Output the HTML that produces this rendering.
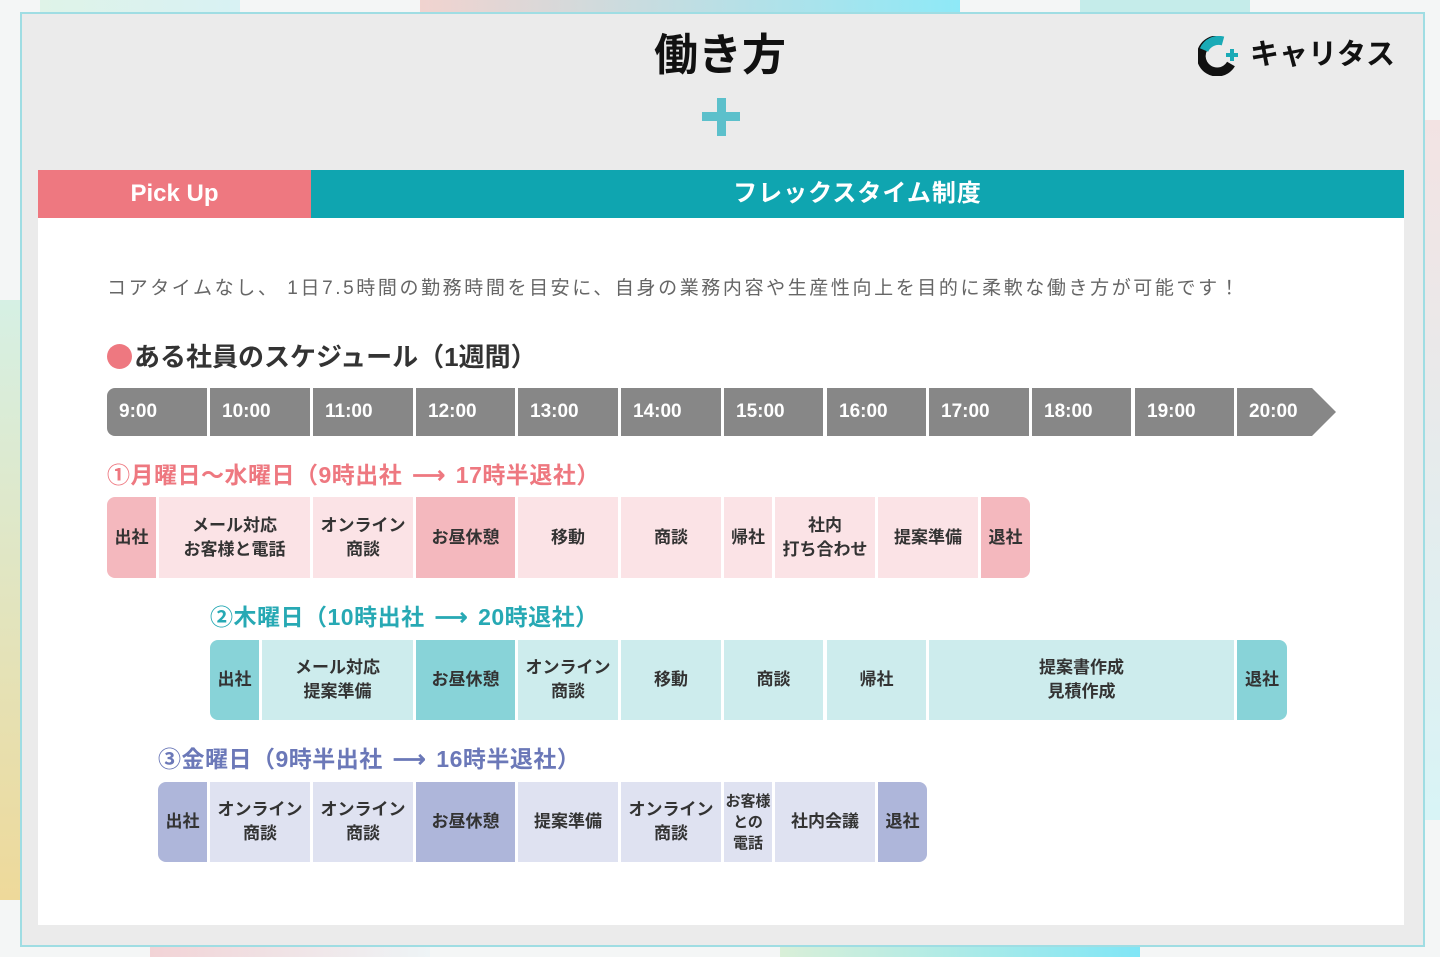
<!DOCTYPE html>
<html><head><meta charset="utf-8"><style>
*{margin:0;padding:0;box-sizing:border-box}
body{width:1440px;height:957px;overflow:hidden;position:relative;background:#f4f6f6;font-family:"Liberation Sans","Noto Sans CJK JP",sans-serif}
.a{position:absolute}
.c{position:absolute;display:flex;align-items:center;justify-content:center;text-align:center;font-weight:bold;font-size:17px;line-height:24px;color:#333}
.t{position:absolute;top:388px;height:48px;background:#878787;color:#fff;font-weight:bold;font-size:19px;display:flex;align-items:center;padding-left:12px}
.p{background:#fbe3e6}.pd{background:#f4b8be}
.g{background:#cdeced}.gd{background:#88d3d8}
.b{background:#dfe2f1}.bd{background:#aeb6da}
.lb{position:absolute;font-size:23px;line-height:30px;font-weight:bold;letter-spacing:0.5px}
.ar{font-size:23px;margin:0 10px}
</style></head><body>
<div class="a" style="left:40px;top:0;width:200px;height:12px;background:linear-gradient(90deg,#dff3e8,#d8f2f4)"></div>
<div class="a" style="left:420px;top:0;width:540px;height:12px;background:linear-gradient(90deg,#f1d3cf,#8ee9f7)"></div>
<div class="a" style="left:1080px;top:0;width:170px;height:12px;background:#c5ecea"></div>
<div class="a" style="left:0;top:300px;width:20px;height:600px;background:linear-gradient(180deg,#d6f0e4,#eed99a)"></div>
<div class="a" style="left:1424px;top:120px;width:16px;height:700px;background:linear-gradient(180deg,#f3e3e3,#d8f4f6)"></div>
<div class="a" style="left:150px;top:946px;width:280px;height:11px;background:linear-gradient(90deg,#f2d3d6,#eef4f6)"></div>
<div class="a" style="left:780px;top:946px;width:360px;height:11px;background:linear-gradient(90deg,#d9efd8,#80e6f6)"></div>
<div class="a" style="left:20px;top:12px;width:1405px;height:935px;background:#ebebeb;border:2px solid #9fdde3"></div>
<div class="a" style="left:0;top:28px;width:1440px;text-align:center;font-size:44px;font-weight:bold;color:#111;line-height:56px">働き方</div>
<div class="a" style="left:702px;top:98px;width:38px;height:38px">
<div class="a" style="left:15px;top:0;width:9px;height:38px;background:#5cc0cb"></div>
<div class="a" style="left:0;top:14px;width:38px;height:9px;background:#5cc0cb"></div></div>
<div class="a" style="left:1198px;top:36px;width:48px;height:40px">
<svg width="48" height="40" viewBox="0 0 48 40"><path d="M19 4a16 16 0 1 0 14 24" fill="none" stroke="#111" stroke-width="9"/><path d="M6 14A16 16 0 0 1 25 5" fill="none" stroke="#1aaab6" stroke-width="9"/><path d="M34 13v12M28 19h12" stroke="#1aaab6" stroke-width="4"/></svg></div>
<div class="a" style="left:1250px;top:35px;font-size:29px;font-weight:bold;color:#111;line-height:40px;letter-spacing:0">キャリタス</div>
<div class="a" style="left:38px;top:218px;width:1366px;height:707px;background:#fff"></div>
<div class="c" style="left:38px;top:170px;width:273px;height:48px;background:#ee7880;color:#fff;font-size:24px">Pick Up</div>
<div class="c" style="left:311px;top:170px;width:1093px;height:48px;background:#0fa5b0;color:#fff;font-size:24px;letter-spacing:1px">フレックスタイム制度</div>
<div class="a" style="left:107px;top:276px;font-size:19px;color:#666;line-height:26px;letter-spacing:2.6px">コアタイムなし、 1日7.5時間の勤務時間を目安に、自身の業務内容や生産性向上を目的に柔軟な働き方が可能です！</div>
<div class="a" style="left:107px;top:344px;width:25px;height:25px;border-radius:50%;background:#ee7880"></div>
<div class="a" style="left:134px;top:340px;font-size:26px;font-weight:bold;color:#333;line-height:34px">ある社員のスケジュール（1週間）</div>
<div class="t" style="left:107px;width:100px;border-radius:8px 0 0 8px">9:00</div>
<div class="t" style="left:210px;width:100px">10:00</div>
<div class="t" style="left:313px;width:100px">11:00</div>
<div class="t" style="left:416px;width:99px">12:00</div>
<div class="t" style="left:518px;width:100px">13:00</div>
<div class="t" style="left:621px;width:100px">14:00</div>
<div class="t" style="left:724px;width:99px">15:00</div>
<div class="t" style="left:827px;width:99px">16:00</div>
<div class="t" style="left:929px;width:100px">17:00</div>
<div class="t" style="left:1032px;width:99px">18:00</div>
<div class="t" style="left:1135px;width:99px">19:00</div>
<div class="t" style="left:1237px;width:75px">20:00</div>
<svg class="a" style="left:1311px;top:388px" width="26" height="48"><path d="M0 0H1L25 24L1 48H0Z" fill="#878787"/></svg>
<div class="lb" style="left:107px;top:460px;color:#ee7880">①月曜日～水曜日（9時出社<span class="ar">⟶</span>17時半退社）</div>
<div class="c pd" style="left:107px;top:497px;width:49px;height:81px;border-radius:8px 0 0 8px">出社</div>
<div class="c p" style="left:159px;top:497px;width:151px;height:81px">メール対応<br>お客様と電話</div>
<div class="c p" style="left:313px;top:497px;width:100px;height:81px">オンライン<br>商談</div>
<div class="c pd" style="left:416px;top:497px;width:99px;height:81px">お昼休憩</div>
<div class="c p" style="left:518px;top:497px;width:100px;height:81px">移動</div>
<div class="c p" style="left:621px;top:497px;width:100px;height:81px">商談</div>
<div class="c p" style="left:724px;top:497px;width:48px;height:81px">帰社</div>
<div class="c p" style="left:775px;top:497px;width:100px;height:81px">社内<br>打ち合わせ</div>
<div class="c p" style="left:878px;top:497px;width:100px;height:81px">提案準備</div>
<div class="c pd" style="left:981px;top:497px;width:49px;height:81px;border-radius:0 8px 8px 0">退社</div>
<div class="lb" style="left:210px;top:602px;color:#27a9b4">②木曜日（10時出社<span class="ar">⟶</span>20時退社）</div>
<div class="c gd" style="left:210px;top:640px;width:49px;height:80px;border-radius:8px 0 0 8px">出社</div>
<div class="c g" style="left:262px;top:640px;width:151px;height:80px">メール対応<br>提案準備</div>
<div class="c gd" style="left:416px;top:640px;width:99px;height:80px">お昼休憩</div>
<div class="c g" style="left:518px;top:640px;width:100px;height:80px">オンライン<br>商談</div>
<div class="c g" style="left:621px;top:640px;width:100px;height:80px">移動</div>
<div class="c g" style="left:724px;top:640px;width:99px;height:80px">商談</div>
<div class="c g" style="left:827px;top:640px;width:99px;height:80px">帰社</div>
<div class="c g" style="left:929px;top:640px;width:305px;height:80px">提案書作成<br>見積作成</div>
<div class="c gd" style="left:1237px;top:640px;width:50px;height:80px;border-radius:0 8px 8px 0">退社</div>
<div class="lb" style="left:158px;top:744px;color:#6b78b8">③金曜日（9時半出社<span class="ar">⟶</span>16時半退社）</div>
<div class="c bd" style="left:158px;top:782px;width:49px;height:80px;border-radius:8px 0 0 8px">出社</div>
<div class="c b" style="left:210px;top:782px;width:100px;height:80px">オンライン<br>商談</div>
<div class="c b" style="left:313px;top:782px;width:100px;height:80px">オンライン<br>商談</div>
<div class="c bd" style="left:416px;top:782px;width:99px;height:80px">お昼休憩</div>
<div class="c b" style="left:518px;top:782px;width:100px;height:80px">提案準備</div>
<div class="c b" style="left:621px;top:782px;width:100px;height:80px">オンライン<br>商談</div>
<div class="c b" style="left:724px;top:782px;width:48px;height:80px;font-size:15px;line-height:21px">お客様<br>との<br>電話</div>
<div class="c b" style="left:775px;top:782px;width:100px;height:80px">社内会議</div>
<div class="c bd" style="left:878px;top:782px;width:49px;height:80px;border-radius:0 8px 8px 0">退社</div>
</body></html>
